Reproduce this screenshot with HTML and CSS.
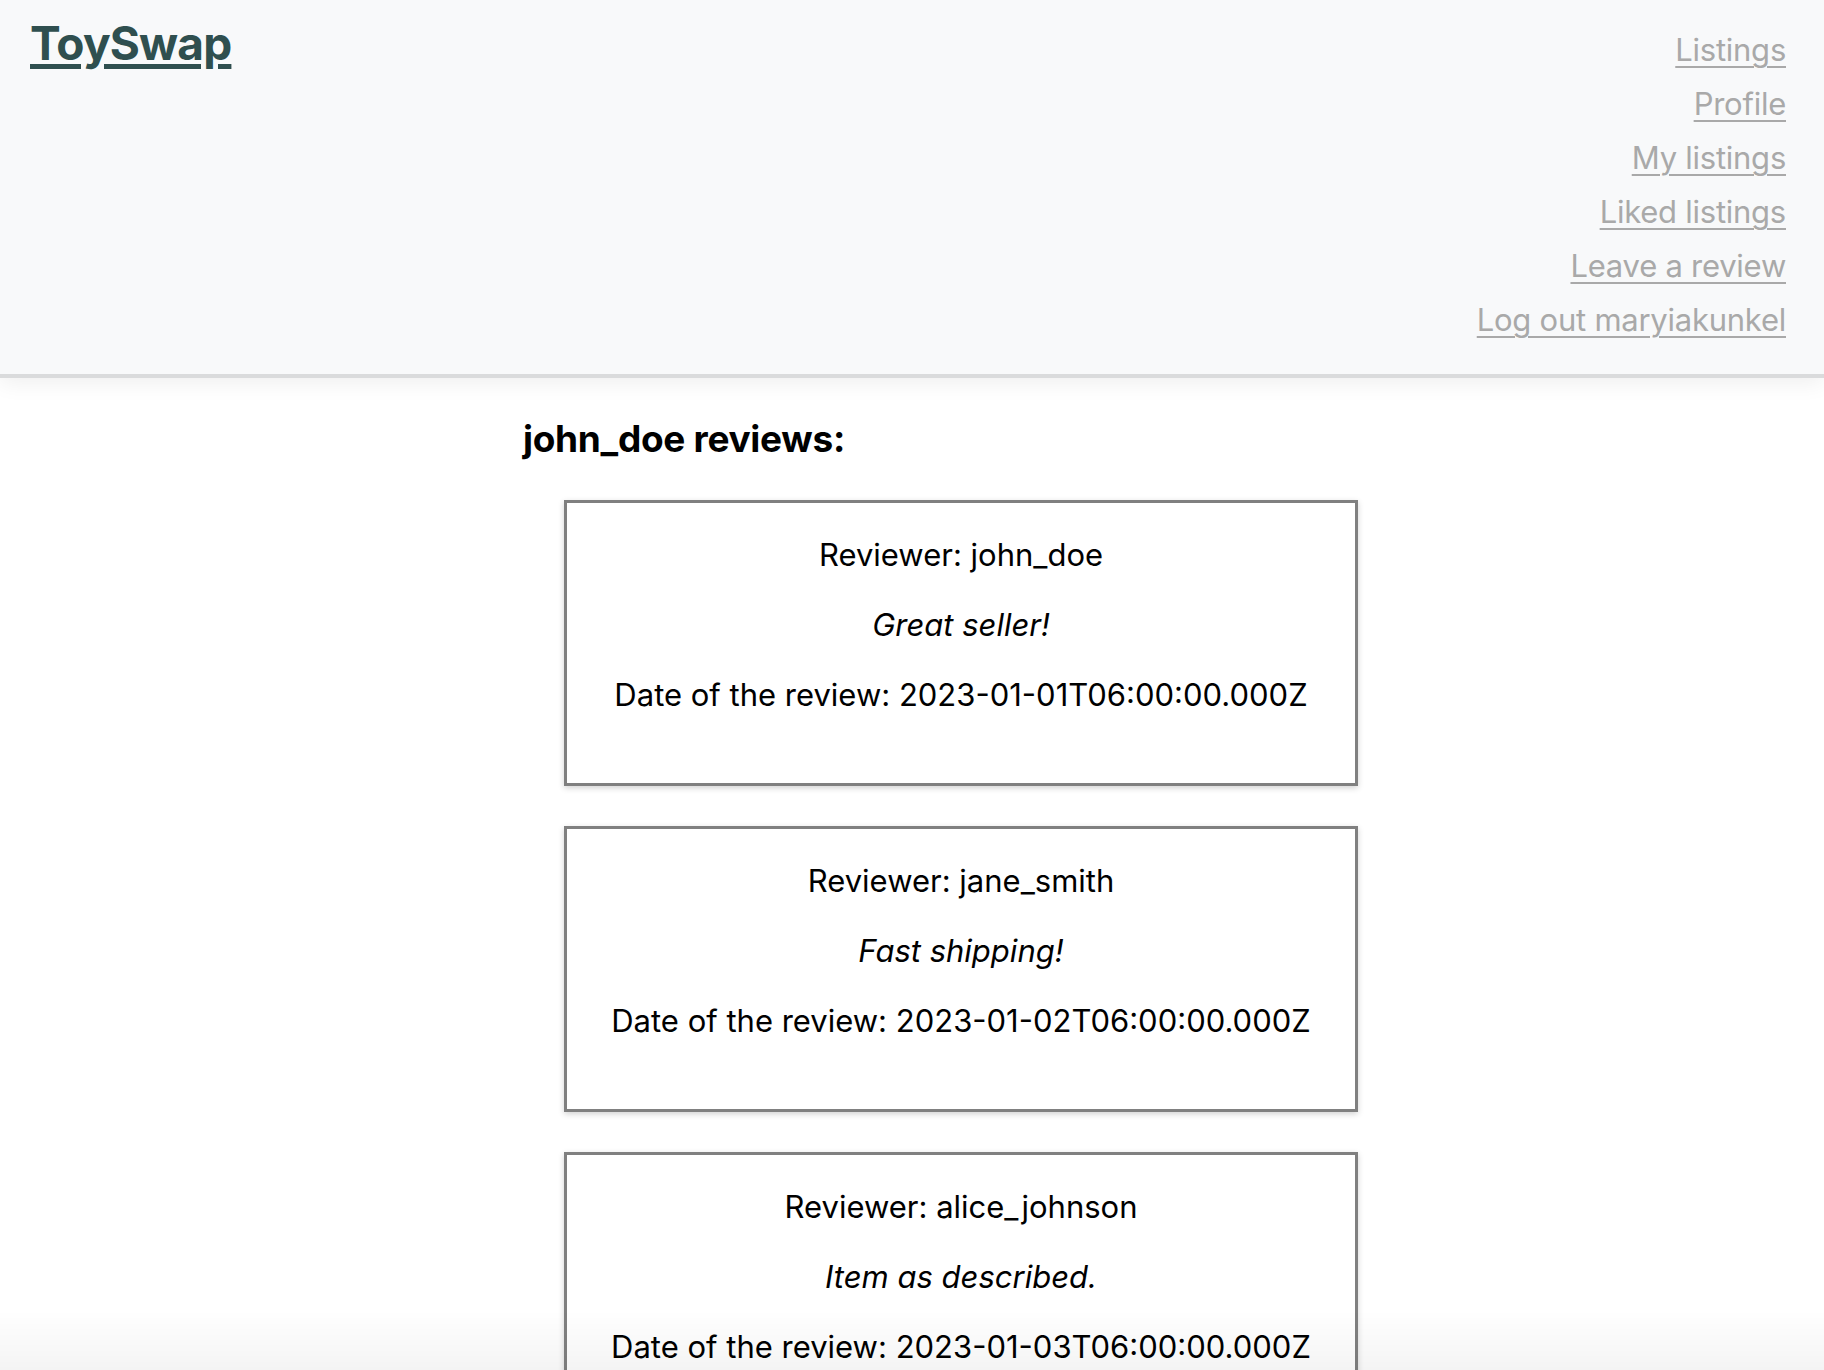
FILE: index.html
```
<!DOCTYPE html>
<html lang="en">
<head>
<meta charset="utf-8">
<title>ToySwap</title>
<link rel="stylesheet" href="styles.css">
</head>
<body>
<header class="site-header">
  <a class="logo" href="#">ToySwap</a>
  <nav class="nav">
    <a href="#">Listings</a>
    <a href="#">Profile</a>
    <a href="#">My listings</a>
    <a href="#">Liked listings</a>
    <a href="#">Leave a review</a>
    <a href="#">Log out maryiakunkel</a>
  </nav>
</header>
<main class="content">
  <h2 class="title">john_doe reviews:</h2>
  <ul class="reviews">
    <li class="card">
      <p>Reviewer: john_doe</p>
      <p class="comment">Great seller!</p>
      <p>Date of the review: 2023-01-01T06:00:00.000Z</p>
    </li>
    <li class="card">
      <p>Reviewer: jane_smith</p>
      <p class="comment">Fast shipping!</p>
      <p>Date of the review: 2023-01-02T06:00:00.000Z</p>
    </li>
    <li class="card">
      <p>Reviewer: alice_johnson</p>
      <p class="comment">Item as described.</p>
      <p>Date of the review: 2023-01-03T06:00:00.000Z</p>
    </li>
  </ul>
</main>
<div class="bottom-fade"></div>
</body>
</html>
```
FILE: styles.css
```
html, body {
  margin: 0;
  padding: 0;
  background: #ffffff;
  font-family: Inter, "Liberation Sans", sans-serif;
  color: #000;
}

.site-header {
  display: flex;
  justify-content: space-between;
  align-items: flex-start;
  background: #f8f9fa;
  padding: 15px 38px 27px 30px;
  box-shadow: 0 4px 0 #dadbdc, 0 8px 22px rgba(0, 0, 0, 0.07);
  position: relative;
  z-index: 1;
}

.logo {
  font-size: 46px;
  font-weight: 700;
  line-height: 56px;
  color: #2f4f4f;
  text-decoration: underline;
  text-decoration-thickness: 5px;
  text-underline-offset: 4px;
  letter-spacing: -0.8px;
}

.nav {
  display: flex;
  flex-direction: column;
  align-items: flex-end;
  padding-top: 8px;
}

.nav a {
  font-size: 31px;
  line-height: 54px;
  color: #a9a9a9;
  text-decoration: underline;
  text-decoration-thickness: 2px;
  text-underline-offset: 5px;
  letter-spacing: -0.25px;
}

.content {
  width: 778px;
  margin: 0 auto;
  padding-top: 42px;
}

.title {
  font-size: 37px;
  font-weight: 700;
  line-height: 46px;
  margin: 0 0 38px 0;
  letter-spacing: -0.3px;
}

.reviews {
  list-style: none;
  margin: 0;
  padding: 0 0 0 41px;
  display: flex;
  flex-direction: column;
  gap: 40px;
}

.card {
  width: 788px;
  border: 3px solid #808080;
  box-shadow: 0 2px 6px rgba(0, 0, 0, 0.18);
  padding: 17px 0 53px 0;
  text-align: center;
}

.card p {
  margin: 0;
  font-size: 31px;
  line-height: 70px;
}

.card .comment {
  font-style: italic;
}

.bottom-fade {
  position: fixed;
  left: 0;
  right: 0;
  bottom: 0;
  height: 60px;
  background: linear-gradient(to bottom, rgba(0, 0, 0, 0), rgba(0, 0, 0, 0.045));
  pointer-events: none;
}
```
